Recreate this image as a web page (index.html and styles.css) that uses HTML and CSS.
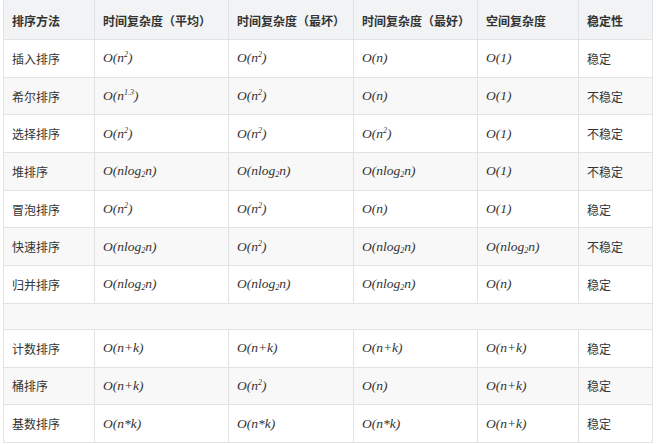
FILE: index.html
```html
<!DOCTYPE html>
<html lang="zh">
<head>
<meta charset="utf-8">
<link rel="stylesheet" href="styles.css">
</head>
<body>
<table class="tbl">
  <colgroup>
    <col class="c1"><col class="c2"><col class="c3"><col class="c4"><col class="c5"><col class="c6">
  </colgroup>
  <thead>
    <tr><th>排序方法</th><th>时间复杂度（平均）</th><th>时间复杂度（最坏）</th><th>时间复杂度（最好）</th><th>空间复杂度</th><th>稳定性</th></tr>
  </thead>
  <tbody>
    <tr><td>插入排序</td><td class="m">O(n<sup>2</sup>)</td><td class="m">O(n<sup>2</sup>)</td><td class="m">O(n)</td><td class="m">O(1)</td><td>稳定</td></tr>
    <tr><td>希尔排序</td><td class="m">O(n<sup>1.3</sup>)</td><td class="m">O(n<sup>2</sup>)</td><td class="m">O(n)</td><td class="m">O(1)</td><td>不稳定</td></tr>
    <tr><td>选择排序</td><td class="m">O(n<sup>2</sup>)</td><td class="m">O(n<sup>2</sup>)</td><td class="m">O(n<sup>2</sup>)</td><td class="m">O(1)</td><td>不稳定</td></tr>
    <tr><td>堆排序</td><td class="m">O(nlog<sub>2</sub>n)</td><td class="m">O(nlog<sub>2</sub>n)</td><td class="m">O(nlog<sub>2</sub>n)</td><td class="m">O(1)</td><td>不稳定</td></tr>
    <tr><td>冒泡排序</td><td class="m">O(n<sup>2</sup>)</td><td class="m">O(n<sup>2</sup>)</td><td class="m">O(n)</td><td class="m">O(1)</td><td>稳定</td></tr>
    <tr><td>快速排序</td><td class="m">O(nlog<sub>2</sub>n)</td><td class="m">O(n<sup>2</sup>)</td><td class="m">O(nlog<sub>2</sub>n)</td><td class="m">O(nlog<sub>2</sub>n)</td><td>不稳定</td></tr>
    <tr><td>归并排序</td><td class="m">O(nlog<sub>2</sub>n)</td><td class="m">O(nlog<sub>2</sub>n)</td><td class="m">O(nlog<sub>2</sub>n)</td><td class="m">O(n)</td><td>稳定</td></tr>
    <tr class="gap"><td colspan="6"></td></tr>
    <tr><td>计数排序</td><td class="m">O(n+k)</td><td class="m">O(n+k)</td><td class="m">O(n+k)</td><td class="m">O(n+k)</td><td>稳定</td></tr>
    <tr><td>桶排序</td><td class="m">O(n+k)</td><td class="m">O(n<sup>2</sup>)</td><td class="m">O(n)</td><td class="m">O(n+k)</td><td>稳定</td></tr>
    <tr><td>基数排序</td><td class="m">O(n*k)</td><td class="m">O(n*k)</td><td class="m">O(n*k)</td><td class="m">O(n+k)</td><td>稳定</td></tr>
  </tbody>
</table>
</body>
</html>
```
FILE: styles.css
```css
html, body {
  margin: 0;
  padding: 0;
  background: #ffffff;
}
body {
  padding: 0 0 0 3px;
  font-family: "Noto Sans CJK SC", "Noto Sans", sans-serif;
  color: #333333;
}
.tbl {
  border-collapse: collapse;
  table-layout: fixed;
  width: 649px;
  font-size: 12px;
}
.c1 { width: 91px; }
.c2 { width: 134px; }
.c3 { width: 125px; }
.c4 { width: 124px; }
.c5 { width: 101px; }
.c6 { width: 74px; }
.tbl th, .tbl td {
  border: 1px solid #e2e2e2;
  height: 37.7px;
  padding: 0 0 0 8px;
  text-align: left;
  vertical-align: middle;
  box-sizing: border-box;
  white-space: nowrap;
}
.tbl thead th {
  background: #f2f3f4;
  font-weight: bold;
  border-top-color: #f2f3f4;
  height: 39px;
}
.tbl tbody tr:nth-child(even) td {
  background: #f8f8f8;
}
.tbl tr.gap td {
  height: 26px;
  background: #f6f6f6;
}
.m {
  font-family: "Liberation Serif", "DejaVu Serif", serif;
  font-style: italic;
  font-size: 13.5px;
}
.m sup, .m sub {
  font-size: 8px;
  line-height: 0;
}
.m sup { vertical-align: 5px; }
.m sub { vertical-align: -2px; }
```
